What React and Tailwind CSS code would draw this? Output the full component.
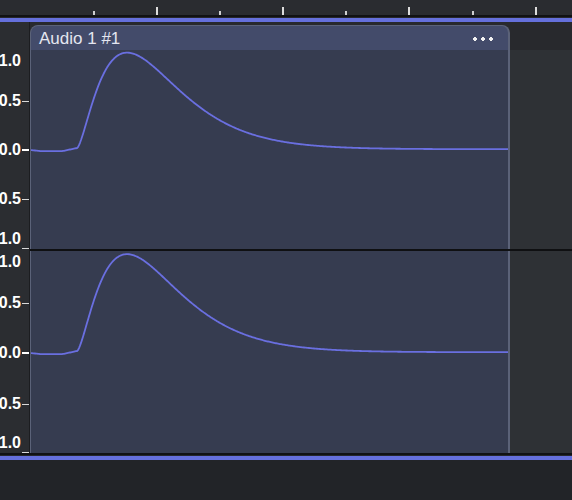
import React from 'react'

const WAVE = '#6a6fe0'

// sample value at page x (clip starts at x=30, onset at x=77)
function sample(x) {
  const t = x - 77
  if (t < 0) {
    if (x < 40) return -0.01 * ((x - 30) / 10)
    if (x < 62) return -0.012
    return -0.012 + 0.032 * ((x - 62) / 15)
  }
  const u = t / 50
  const shape = Math.pow(u, 1.5) * Math.exp(1.5 * (1 - u))
  return 0.02 * Math.exp(-t / 8) + shape * 0.99 + 0.008 * Math.min(1, t / 120)
}

function wavePath(width, mid, amp) {
  let d = ''
  for (let i = 0; i <= width; i++) {
    const y = mid - sample(i + 31) * amp
    d += (i === 0 ? 'M' : 'L') + i + ' ' + y.toFixed(2) + ' '
  }
  return d
}

function Waveform({ height, mid, amp }) {
  return (
    <svg width="477" height={height} viewBox={`0 0 477 ${height}`} className="block">
      <path d={wavePath(477, mid, amp)} fill="none" stroke={WAVE} strokeWidth="1.8" strokeLinejoin="round" />
    </svg>
  )
}

function Tick({ thick }) {
  return <div className={thick ? 'ml-[1px] h-[2px] w-[7px] shrink-0 bg-white' : 'ml-[1px] h-[1px] w-[7px] shrink-0 bg-[#d9d9d9]'} />
}

function Label({ text }) {
  return <span className="shrink-0 whitespace-nowrap text-[16px] font-bold leading-none text-white">{text}</span>
}

function TimeRuler() {
  const ticks = [false, true, false, true, false, true, false, true]
  return (
    <div className="flex h-[15px] shrink-0 items-end gap-[61.1px] bg-[#2a2c30] pl-[93px]">
      {ticks.map((tall, i) => (
        <div key={i} className={tall ? 'h-[8px] w-[2px] bg-[#dcdcdc]' : 'h-[4px] w-[2px] bg-[#cfcfcf]'} />
      ))}
    </div>
  )
}

function Bar() {
  return (
    <>
      <div className="h-[2px] shrink-0 bg-[#111214]" />
      <div className="h-[1px] shrink-0 bg-[#26282c]" />
      <div className="h-[4px] shrink-0 bg-[#6570dc]" />
    </>
  )
}

function AmpRuler() {
  return (
    <div className="flex w-[30px] shrink-0 flex-col overflow-hidden border-r border-[#1c1d20] bg-[#2b2d31]">
      <div className="h-[28px] shrink-0" />

      {/* channel 1 scale */}
      <div className="flex h-[199px] shrink-0 flex-col">
        <div className="flex h-[22px] items-center justify-end pr-[8px]"><Label text="1.0" /></div>
        <div className="mt-[19px] flex h-[20px] items-center justify-end"><Label text="0.5" /><Tick /></div>
        <div className="mt-[29px] flex h-[20px] items-center justify-end"><Label text="0.0" /><Tick thick /></div>
        <div className="mt-[29px] flex h-[20px] items-center justify-end"><Label text="-0.5" /><Tick /></div>
        <div className="mt-[19px] flex h-[21px] items-center justify-end">
          <Label text="-1.0" />
          <div className="ml-[1px] h-full w-[7px] shrink-0 flex items-end"><div className="h-[1px] w-full bg-[#d9d9d9]" /></div>
        </div>
      </div>

      <div className="h-[2px] shrink-0" />

      {/* channel 2 scale */}
      <div className="flex h-[202px] shrink-0 flex-col">
        <div className="flex h-[22px] items-center justify-end pr-[8px]"><Label text="1.0" /></div>
        <div className="mt-[20px] flex h-[20px] items-center justify-end"><Label text="0.5" /><Tick /></div>
        <div className="mt-[30px] flex h-[20px] items-center justify-end"><Label text="0.0" /><Tick thick /></div>
        <div className="mt-[31px] flex h-[20px] items-center justify-end"><Label text="-0.5" /><Tick /></div>
        <div className="mt-[18px] flex h-[21px] items-center justify-end">
          <Label text="-1.0" />
          <div className="ml-[1px] h-full w-[7px] shrink-0 flex items-end"><div className="h-[1px] w-full bg-[#d9d9d9]" /></div>
        </div>
      </div>
    </div>
  )
}

function Channel({ height, mid, amp }) {
  return (
    <div className="flex shrink-0" style={{ height }}>
      <div className="w-[480px] shrink-0 border-l border-r-2 border-[#5b6278] bg-[#363c50]">
        <Waveform height={height} mid={mid} amp={amp} />
      </div>
      <div className="flex-1 bg-[#2e3135]" />
    </div>
  )
}

export default function App() {
  return (
    <div className="flex h-[500px] w-[572px] flex-col overflow-hidden bg-[#222428] font-['Liberation_Sans',Arial,sans-serif]">
      <TimeRuler />
      <Bar />

      <div className="flex h-[431px] shrink-0">
        <AmpRuler />

        <div className="flex min-w-0 flex-1 flex-col">
          {/* clip title row */}
          <div className="flex h-[28px] shrink-0 items-end bg-[#28292d]">
            <div className="flex h-[25px] w-[480px] shrink-0 items-center justify-between rounded-t-[8px] border-l border-r-2 border-t border-[#5b6278] bg-[#434b6a] pl-[8px] pr-[14px]">
              <span className="text-[17px] leading-none text-[#e4e6f0]">Audio 1 #1</span>
              <svg width="22" height="6" viewBox="0 0 22 6" className="mt-[1px]">
                {[3, 11, 19].map((cx) => (
                  <g key={cx} fill="#f2f2f2">
                    <rect x={cx - 1} y="1" width="2" height="4" />
                    <rect x={cx - 2} y="2" width="4" height="2" />
                  </g>
                ))}
              </svg>
            </div>
          </div>

          <Channel height={199} mid={100} amp={98} />
          <div className="h-[2px] shrink-0 bg-[#0f1012]" />
          <Channel height={202} mid={102} amp={99.5} />
        </div>
      </div>

      <Bar />
    </div>
  )
}
